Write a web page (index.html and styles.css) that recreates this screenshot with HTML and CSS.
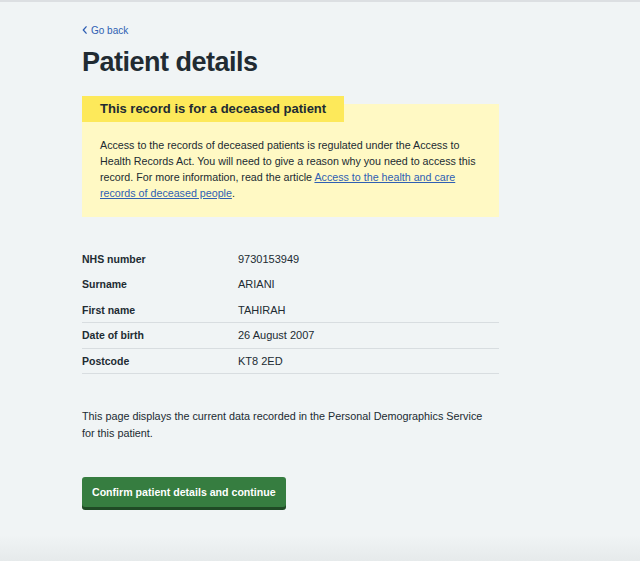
FILE: index.html
```html
<!DOCTYPE html>
<html lang="en">
<head>
<meta charset="utf-8">
<title>Patient details</title>
<link rel="stylesheet" href="styles.css">
</head>
<body>
<div class="page">
  <main class="container">
    <a class="back-link" href="#">
      <svg class="back-chevron" viewBox="0 0 6 10" width="5" height="8" aria-hidden="true"><path d="M5 1 L1.5 5 L5 9" fill="none" stroke="currentColor" stroke-width="1.6" stroke-linecap="round" stroke-linejoin="round"/></svg>
      <span>Go back</span>
    </a>
    <h1 class="heading">Patient details</h1>

    <div class="callout">
      <h2 class="callout-label">This record is for a deceased patient</h2>
      <p class="callout-text">Access to the records of deceased patients is regulated under the Access to Health Records Act. You will need to give a reason why you need to access this record. For more information, read the article <a class="link" href="#">Access to the health and care records of deceased people</a>.</p>
    </div>

    <dl class="summary">
      <div class="summary-row no-border"><dt>NHS number</dt><dd>9730153949</dd></div>
      <div class="summary-row no-border"><dt>Surname</dt><dd>ARIANI</dd></div>
      <div class="summary-row"><dt>First name</dt><dd>TAHIRAH</dd></div>
      <div class="summary-row"><dt>Date of birth</dt><dd>26 August 2007</dd></div>
      <div class="summary-row"><dt>Postcode</dt><dd>KT8 2ED</dd></div>
    </dl>

    <p class="info">This page displays the current data recorded in the Personal Demographics Service for this patient.</p>

    <button class="button" type="button">Confirm patient details and continue</button>
  </main>
  <div class="footer-shade"></div>
</div>
</body>
</html>
```

FILE: styles.css
```css
html, body {
  margin: 0;
  padding: 0;
}
body {
  background: #f0f4f5;
  font-family: "Liberation Sans", Arial, sans-serif;
  color: #212b32;
  border-top: 2px solid #dcdfe2;
}
.page {
  min-height: 559px;
  display: flex;
  flex-direction: column;
}
.container {
  flex: 1;
  width: 417px;
  padding: 21px 0 0 82px;
}
.back-link {
  display: flex;
  align-items: center;
  gap: 4px;
  height: 14px;
  font-size: 10px;
  color: #2f5fb3;
  text-decoration: none;
}
.back-chevron {
  display: block;
}
.heading {
  margin: 8px 0 0;
  font-size: 27px;
  line-height: 34px;
  font-weight: 700;
  letter-spacing: -0.5px;
}
.callout {
  display: flow-root;
  margin-top: 25px;
  background: #fff9c4;
  padding: 0 18px 16px;
}
.callout-label {
  width: fit-content;
  margin: -8px 0 0 -18px;
  padding: 0 18px;
  height: 26px;
  line-height: 26px;
  background: #fde95a;
  font-size: 13px;
  font-weight: 700;
}
.callout-text {
  margin: 15px 0 0;
  font-size: 10.7px;
  line-height: 16px;
}
.link {
  color: #2f5fb3;
  text-decoration: underline;
}
.summary {
  margin: 29.5px 0 0;
}
.summary-row {
  display: grid;
  grid-template-columns: 156px 1fr;
  padding: 6px 0;
  line-height: 12.5px;
  font-size: 10.5px;
  border-bottom: 1px solid #d8dde0;
}
.summary-row.no-border {
  border-bottom-color: transparent;
}
.summary-row dt {
  font-weight: 700;
}
.summary-row dd {
  margin: 0;
  font-size: 11px;
}
.info {
  margin: 34px 0 0;
  max-width: 412px;
  font-size: 10.8px;
  line-height: 17px;
}
.button {
  margin-top: 35px;
  display: block;
  height: 30px;
  padding: 0 10px;
  background: #367d40;
  border: 0;
  border-radius: 3px;
  box-shadow: 0 3px 0 #1f4a25;
  color: #ffffff;
  font-family: inherit;
  font-size: 10.6px;
  font-weight: 700;
}
.footer-shade {
  height: 26px;
  background: linear-gradient(rgba(220, 226, 228, 0), #e6eaeb);
}
```
